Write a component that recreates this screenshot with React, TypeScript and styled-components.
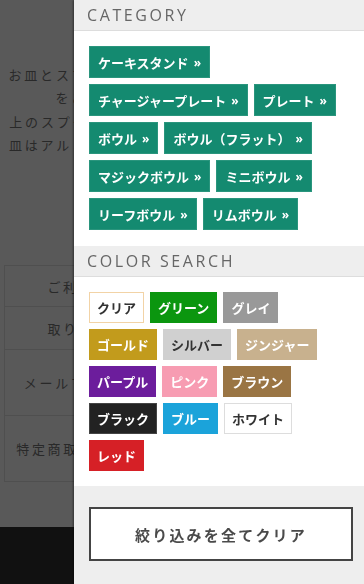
import styled, { createGlobalStyle } from 'styled-components'

// ---| Global |-------------------------------------------

const GlobalStyle = createGlobalStyle`
  * { box-sizing: border-box; }
  html, body { margin: 0; padding: 0; }
  body {
    font-family: 'Noto Sans CJK JP', 'Noto Sans', sans-serif;
    background: #fff;
  }
  button { font-family: inherit; cursor: pointer; }
`

// ---| Page behind the drawer |---------------------------

const Page = styled.div`
  width: 364px;
  min-height: 584px;
  display: flex;
  flex-direction: column;
  background: #fff;
`

const Intro = styled.div`
  padding-top: 63px;
  text-align: center;
  font-size: 13px;
  letter-spacing: 2.8px;
  line-height: 23.3px;
  color: #777;
`

const IntroLine = styled.p`
  margin: 0;
  white-space: nowrap;
`

const InfoTable = styled.table`
  margin: 109px 4px 0;
  width: 356px;
  border-collapse: collapse;
`

const InfoRow = styled.tr<{ $h: number }>`
  height: ${p => p.$h}px;
`

const InfoLabel = styled.th`
  width: 180px;
  border: 1px solid #e2e2e2;
  font-weight: 400;
  font-size: 13px;
  letter-spacing: 2.7px;
  color: #777;
  text-align: center;
`

const InfoValue = styled.td`
  border: 1px solid #e2e2e2;
  padding: 0 10px;
  font-size: 12px;
  color: #777;
`

const PageFooter = styled.footer`
  margin-top: 45px;
  flex: 1;
  min-height: 57px;
  background: #333;
`

// ---| Drawer |-------------------------------------------

const Backdrop = styled.div`
  position: fixed;
  inset: 0;
  background: rgba(0, 0, 0, .65);
`

const Drawer = styled.aside`
  position: fixed;
  top: 0; right: 0; bottom: 0;
  width: 290px;
  background: #fff;
  box-shadow: -1px 0 2px rgba(0, 0, 0, .45);
  display: flex;
  flex-direction: column;
`

const SectionHead = styled.h2`
  margin: 0;
  height: 31px;
  padding: 0 13px;
  display: flex;
  align-items: center;
  background: #eee;
  border-bottom: 1px solid #ddd;
  font-family: 'Open Sans', sans-serif;
  font-weight: 400;
  font-size: 16px;
  letter-spacing: 2.6px;
  color: #666;
`

const TagList = styled.div`
  padding: 15px 15px 16px;
  display: flex;
  flex-wrap: wrap;
  gap: 6px;
`

const CategoryLink = styled.a`
  height: 32px;
  padding: 0 8px;
  display: inline-flex;
  align-items: center;
  background: #148a70;
  border: 1px solid #2a957d;
  color: #fff;
  font-weight: 700;
  font-size: 13px;
  text-decoration: none;
  white-space: nowrap;
`

const Chevron = styled.span`
  margin-left: 5px;
  font-family: 'Open Sans', sans-serif;
  font-weight: 700;
  font-size: 12px;
`

const ColorList = styled(TagList)`
  padding: 15px 15px 15px;
`

const ColorChip = styled.button<{ $bg: string; $fg: string; $line: string }>`
  height: 31px;
  padding: 0 7px;
  border: 1px solid ${p => p.$line};
  background: ${p => p.$bg};
  color: ${p => p.$fg};
  font-weight: 700;
  font-size: 13px;
  white-space: nowrap;
`

const DrawerFooter = styled.div`
  flex: 1;
  padding: 21px 11px 0 15px;
  background: #eee;
`

const ClearButton = styled.button`
  width: 100%;
  height: 54px;
  background: #fff;
  border: 2px solid #444;
  color: #4a4a4a;
  font-weight: 700;
  font-size: 15px;
  letter-spacing: 2.2px;
`

// ---| Data |---------------------------------------------

const categories = [
  'ケーキスタンド',
  'チャージャープレート',
  'プレート',
  'ボウル',
  'ボウル（フラット）',
  'マジックボウル',
  'ミニボウル',
  'リーフボウル',
  'リムボウル',
]

const colors = [
  { name: 'クリア', bg: '#fff', fg: '#333', line: '#f2d3a6' },
  { name: 'グリーン', bg: '#0b960f', fg: '#fff', line: '#0b960f' },
  { name: 'グレイ', bg: '#999', fg: '#fff', line: '#999' },
  { name: 'ゴールド', bg: '#c29b1c', fg: '#fff', line: '#c29b1c' },
  { name: 'シルバー', bg: '#d0d0d0', fg: '#333', line: '#d0d0d0' },
  { name: 'ジンジャー', bg: '#c8b18e', fg: '#fff', line: '#c8b18e' },
  { name: 'パープル', bg: '#6c1d9c', fg: '#fff', line: '#6c1d9c' },
  { name: 'ピンク', bg: '#f79cb2', fg: '#fff', line: '#f79cb2' },
  { name: 'ブラウン', bg: '#9a7544', fg: '#fff', line: '#9a7544' },
  { name: 'ブラック', bg: '#222', fg: '#fff', line: '#444' },
  { name: 'ブルー', bg: '#1ba3da', fg: '#fff', line: '#1ba3da' },
  { name: 'ホワイト', bg: '#fff', fg: '#333', line: '#ddd' },
  { name: 'レッド', bg: '#d62026', fg: '#fff', line: '#d62026' },
]

export default function App() {
  return (
    <>
      <GlobalStyle />
      <Page>
        <Intro>
          <IntroLine>お皿とスプーンのセットで食卓をもっと楽しく。</IntroLine>
          <IntroLine>をご用意しました。ぜひご覧下さい</IntroLine>
          <IntroLine>上のスプーンはステンレス製でとても丈夫で、お</IntroLine>
          <IntroLine>皿はアルミ製で軽く、扱いやすいのが特徴です。</IntroLine>
        </Intro>
        <InfoTable>
          <tbody>
            <InfoRow $h={41}><InfoLabel>ご利用ガイド</InfoLabel><InfoValue>詳しくはこちら</InfoValue></InfoRow>
            <InfoRow $h={43}><InfoLabel>取り扱い店舗</InfoLabel><InfoValue>店舗一覧</InfoValue></InfoRow>
            <InfoRow $h={66}><InfoLabel>メールマガジン登録</InfoLabel><InfoValue>新商品やセール情報をお届けします</InfoValue></InfoRow>
            <InfoRow $h={66}><InfoLabel>特定商取引法について</InfoLabel><InfoValue>特定商取引法に基づく表記はこちら</InfoValue></InfoRow>
          </tbody>
        </InfoTable>
        <PageFooter />
      </Page>

      <Backdrop />
      <Drawer>
        <SectionHead>CATEGORY</SectionHead>
        <TagList>
          {categories.map(c => (
            <CategoryLink key={c} href="#">
              {c}<Chevron>»</Chevron>
            </CategoryLink>
          ))}
        </TagList>

        <SectionHead>COLOR SEARCH</SectionHead>
        <ColorList>
          {colors.map(c => (
            <ColorChip key={c.name} $bg={c.bg} $fg={c.fg} $line={c.line}>{c.name}</ColorChip>
          ))}
        </ColorList>

        <DrawerFooter>
          <ClearButton>絞り込みを全てクリア</ClearButton>
        </DrawerFooter>
      </Drawer>
    </>
  )
}
